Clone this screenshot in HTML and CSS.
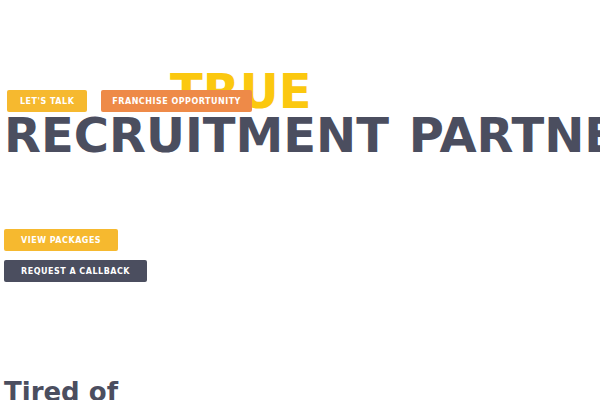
FILE: index.html
```html
<!DOCTYPE html>
<html lang="en">
<head>
<meta charset="utf-8">
<title>True Recruitment Partner</title>
<link rel="stylesheet" href="styles.css">
</head>
<body>
<div class="page">
  <nav class="topnav">
    <a class="btn btn-yellow btn-talk" href="#">LET'S TALK</a>
    <a class="btn btn-orange" href="#">FRANCHISE OPPORTUNITY</a>
  </nav>
  <section class="hero">
    <h1 class="hero-title">
      <span class="title-true">TRUE</span>
      <span class="title-main">RECRUITMENT PARTNER</span>
    </h1>
    <div class="cta">
      <a class="btn btn-yellow btn-cta" href="#">VIEW PACKAGES</a>
      <a class="btn btn-dark btn-cta" href="#">REQUEST A CALLBACK</a>
    </div>
  </section>
  <section class="intro">
    <h2 class="intro-title">Tired of</h2>
  </section>
</div>
</body>
</html>
```
FILE: styles.css
```css
html, body {
  margin: 0;
  padding: 0;
  background: #ffffff;
  overflow: hidden;
}
body {
  font-family: "DejaVu Sans", "Liberation Sans", sans-serif;
  color: #4b4e5f;
}
.page {
  position: relative;
  padding: 0 4px;
  width: 600px;
  box-sizing: border-box;
}
.topnav {
  position: absolute;
  top: 90px;
  left: 7px;
  display: flex;
  gap: 14px;
  z-index: 2;
}
.btn {
  display: inline-flex;
  align-items: center;
  height: 22px;
  padding: 0 11px;
  font-size: 8px;
  font-weight: bold;
  letter-spacing: 0.5px;
  color: #ffffff;
  text-decoration: none;
  border-radius: 2px;
  white-space: nowrap;
  box-sizing: border-box;
}
.btn-talk {
  padding: 0 13px;
}
.btn-yellow {
  background: #f6b92f;
}
.btn-orange {
  background: #ee8a48;
}
.btn-dark {
  background: #4b4e5f;
}
.btn-cta {
  padding: 0 17px;
}
.hero {
  padding-top: 69px;
}
.hero-title {
  margin: 0;
  font-size: 48px;
  line-height: 44px;
  font-weight: bold;
  white-space: nowrap;
}
.title-true {
  display: block;
  padding-left: 166px;
  color: #fbc80f;
}
.title-main {
  display: block;
  color: #4b4e5f;
  word-spacing: 3px;
}
.cta {
  display: flex;
  flex-direction: column;
  align-items: flex-start;
  gap: 9px;
  margin-top: 72px;
}
.intro {
  padding-top: 95px;
}
.intro-title {
  margin: 0;
  font-size: 26px;
  line-height: 30px;
  font-weight: bold;
  color: #4b4e5f;
}
```
